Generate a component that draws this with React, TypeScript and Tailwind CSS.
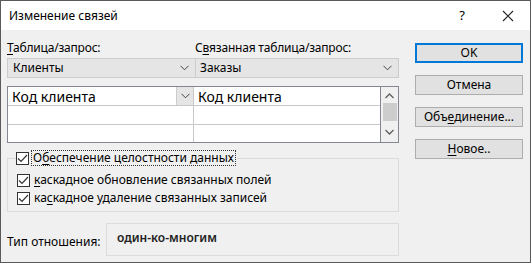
import React from 'react';

const font = { fontFamily: '"Noto Sans", "Open Sans", sans-serif' };

const U = ({ children }: { children: React.ReactNode }) => (
  <span className="underline underline-offset-2 decoration-1">{children}</span>
);

const Chevron = ({ className = '' }: { className?: string }) => (
  <svg width="9" height="6" viewBox="0 0 9 6" className={className}>
    <path d="M0.5 0.8 L4.5 4.8 L8.5 0.8" fill="none" stroke="#444" strokeWidth="1" />
  </svg>
);

const Check = () => (
  <div className="w-[13px] h-[13px] border border-[#333] bg-white flex items-center justify-center shrink-0">
    <svg width="11" height="9" viewBox="0 0 11 9">
      <path d="M1 4.5 L4 7.5 L10 1" fill="none" stroke="#333" strokeWidth="1.2" />
    </svg>
  </div>
);

const Btn = ({ children, primary }: { children: React.ReactNode; primary?: boolean }) => (
  <div
    className={
      'h-[20px] w-[108px] flex items-center justify-center bg-[#e1e1e1] text-[12px] text-[#000] ' +
      (primary ? 'border-2 border-[#0078d7]' : 'border border-[#adadad]')
    }
  >
    {children}
  </div>
);

export default function App() {
  return (
    <div className="w-[532px] h-[264px] bg-white" style={font}>
      <div className="w-[531px] h-[263px] border border-[#5a5a5a] bg-[#f0f0f0] flex flex-col text-[12px] text-black">
        <div className="h-[29px] bg-white flex items-center justify-between shrink-0">
          <span className="ml-[8px] text-[12px]">Изменение связей</span>
          <div className="flex items-center">
            <span className="text-[13px] mr-[37px]">?</span>
            <svg width="12" height="12" viewBox="0 0 12 12" className="mr-[16px]">
              <path d="M1 1 L11 11 M11 1 L1 11" stroke="#222" strokeWidth="1.1" />
            </svg>
          </div>
        </div>
        <div className="flex flex-1">
          <div className="w-[392px] ml-[6px] flex flex-col">
            <div className="flex mt-[10px] h-[16px] items-center tracking-[-0.2px]">
              <span className="w-[188px]"><U>Т</U>аблица/запрос:</span>
              <span>С<U>в</U>язанная таблица/запрос:</span>
            </div>
            <div className="flex mt-[2px] h-[20px] border border-[#cccccc] bg-[#e5e5e5]">
              <div className="w-[188px] flex items-center justify-between pl-[5px] pr-[6px] border-r border-[#cccccc]">
                <span>Клиенты</span>
                <Chevron />
              </div>
              <div className="flex-1 flex items-center justify-between pl-[4px] pr-[6px]">
                <span>Заказы</span>
                <Chevron />
              </div>
            </div>
            <div className="mt-[8px] h-[57px] border border-[#828790] bg-white flex text-[14px]">
              <div className="flex-1 flex flex-col">
                <div className="flex h-[19px] border-b border-[#c8c8c8]">
                  <div className="w-[186px] flex items-center justify-between border-r border-[#c8c8c8]">
                    <span className="pl-[4px]">Код клиента</span>
                    <div className="w-[17px] h-full bg-[#e5e5e5] border-l border-[#cccccc] flex items-center justify-center">
                      <Chevron />
                    </div>
                  </div>
                  <div className="flex-1 flex items-center pl-[4px]">Код клиента</div>
                </div>
                <div className="flex h-[19px] border-b border-[#c8c8c8]">
                  <div className="w-[186px] border-r border-[#c8c8c8]" />
                  <div className="flex-1" />
                </div>
                <div className="flex flex-1">
                  <div className="w-[186px] border-r border-[#c8c8c8]" />
                  <div className="flex-1" />
                </div>
              </div>
              <div className="w-[18px] border-l border-[#828790] bg-[#f0f0f0] flex flex-col items-center">
                <svg width="9" height="6" viewBox="0 0 9 6" className="mt-[6px]">
                  <path d="M0.5 5 L4.5 1 L8.5 5" fill="none" stroke="#606060" strokeWidth="1.3" />
                </svg>
                <div className="mt-[4px] w-[14px] h-[18px] bg-[#cdcdcd]" />
                <svg width="9" height="6" viewBox="0 0 9 6" className="mt-[8px]">
                  <path d="M0.5 1 L4.5 5 L8.5 1" fill="none" stroke="#606060" strokeWidth="1.3" />
                </svg>
              </div>
            </div>
            <div className="relative mt-[15px] h-[54px] border border-[#dcdcdc] flex flex-col">
              <div className="absolute -top-[8px] left-[8px] flex items-center bg-[#f0f0f0] pr-[2px]">
                <Check />
                <span className="ml-[3px] outline outline-1 outline-dotted outline-[#333] leading-[14px] px-[1px]">
                  О<U>б</U>еспечение целостности данных
                </span>
              </div>
              <div className="ml-[9px] mt-[13px] flex items-center h-[16px]">
                <Check />
                <span className="ml-[4px]"><U>к</U>аскадное обновление связанных полей</span>
              </div>
              <div className="ml-[9px] mt-[2px] flex items-center h-[16px]">
                <Check />
                <span className="ml-[4px]">ка<U>с</U>кадное удаление связанных записей</span>
              </div>
            </div>
            <div className="flex items-center mt-[11px]">
              <span className="w-[99px] mt-[4px]">Тип отношения:</span>
              <div className="flex-1 h-[33px] border border-[#dcdcdc] flex items-center pl-[10px] pb-[4px] font-semibold text-[#222]">
                один-ко-многим
              </div>
            </div>
          </div>
          <div className="ml-[16px] flex flex-col mt-[13px] gap-[12px]">
            <Btn primary>OK</Btn>
            <Btn>Отмена</Btn>
            <Btn>Объ<U>е</U>динение...</Btn>
            <Btn><U>Н</U>овое..</Btn>
          </div>
        </div>
      </div>
    </div>
  );
}
